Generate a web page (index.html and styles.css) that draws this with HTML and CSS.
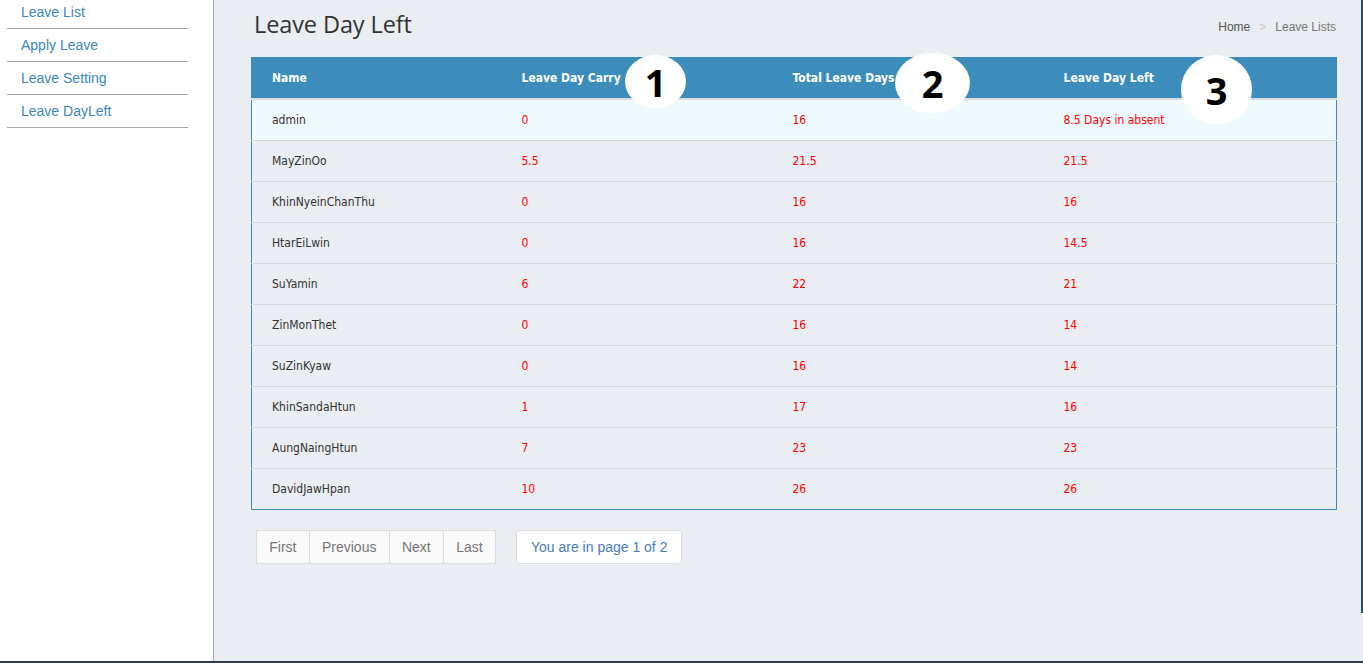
FILE: index.html
```html
<!DOCTYPE html>
<html>
<head>
<meta charset="utf-8">
<title>Leave Day Left</title>
<link rel="stylesheet" href="styles.css">
</head>
<body>
<div class="app">
  <aside class="sidebar">
    <ul class="nav">
      <li><a href="#">Leave List</a></li>
      <li><a href="#">Apply Leave</a></li>
      <li><a href="#">Leave Setting</a></li>
      <li><a href="#">Leave DayLeft</a></li>
    </ul>
  </aside>
  <main class="main">
    <div class="page-head">
      <h1 class="title">Leave Day Left</h1>
      <div class="crumbs"><span class="crumb-home">Home</span><span class="crumb-sep">&gt;</span><span class="crumb-cur">Leave Lists</span></div>
    </div>
    <div class="table-wrap">
      <table class="grid">
        <thead>
          <tr><th class="c1">Name</th><th class="c2">Leave Day Carry</th><th class="c3">Total Leave Days</th><th class="c4">Leave Day Left</th></tr>
        </thead>
        <tbody>
          <tr class="active"><td>admin</td><td class="num">0</td><td class="num">16</td><td class="num">8.5 Days in absent</td></tr>
          <tr><td>MayZinOo</td><td class="num">5.5</td><td class="num">21.5</td><td class="num">21.5</td></tr>
          <tr><td>KhinNyeinChanThu</td><td class="num">0</td><td class="num">16</td><td class="num">16</td></tr>
          <tr><td>HtarEiLwin</td><td class="num">0</td><td class="num">16</td><td class="num">14.5</td></tr>
          <tr><td>SuYamin</td><td class="num">6</td><td class="num">22</td><td class="num">21</td></tr>
          <tr><td>ZinMonThet</td><td class="num">0</td><td class="num">16</td><td class="num">14</td></tr>
          <tr><td>SuZinKyaw</td><td class="num">0</td><td class="num">16</td><td class="num">14</td></tr>
          <tr><td>KhinSandaHtun</td><td class="num">1</td><td class="num">17</td><td class="num">16</td></tr>
          <tr><td>AungNaingHtun</td><td class="num">7</td><td class="num">23</td><td class="num">23</td></tr>
          <tr><td>DavidJawHpan</td><td class="num">10</td><td class="num">26</td><td class="num">26</td></tr>
        </tbody>
      </table>
      <div class="badge b1">1</div>
      <div class="badge b2">2</div>
      <div class="badge b3">3</div>
    </div>
    <div class="pager-row">
      <div class="pager">
        <a href="#" class="pg">First</a><a href="#" class="pg">Previous</a><a href="#" class="pg">Next</a><a href="#" class="pg">Last</a>
      </div>
      <div class="page-info">You are in page 1 of 2</div>
    </div>
  </main>
  <div class="edge"><div class="edge-bar"></div></div>
</div>
<div class="taskbar"></div>
</body>
</html>
```
FILE: styles.css
```css
html, body {
  margin: 0;
  padding: 0;
  height: 663px;
  overflow: hidden;
  background: #eaedf2;
}
.app {
  display: flex;
  height: 661px;
}
.sidebar {
  width: 213px;
  flex: none;
  background: #ffffff;
  border-right: 1px solid #a9a9a9;
  overflow: hidden;
}
.nav {
  list-style: none;
  margin: -4px 0 0 7px;
  padding: 0;
  width: 181px;
}
.nav li {
  height: 32px;
  border-bottom: 1px solid #a5a5a5;
  display: flex;
  align-items: center;
}
.nav a {
  padding-left: 14px;
  font-family: "Liberation Sans", Arial, sans-serif;
  font-size: 14px;
  color: #3c87c1;
  text-decoration: none;
}
.main {
  flex: 1;
  padding: 0 24px 0 37px;
  min-width: 0;
}
.edge {
  width: 2px;
  flex: none;
}
.edge-bar {
  height: 613px;
  background: #1f4e6d;
}
.page-head {
  display: flex;
  justify-content: space-between;
  align-items: flex-start;
  height: 57px;
}
.title {
  margin: 8px 0 0 3px;
  font-family: "Open Sans", sans-serif;
  font-weight: 400;
  font-size: 23.5px;
  letter-spacing: -0.1px;
  color: #333333;
}
.crumbs {
  margin-top: 20px;
  margin-right: 1px;
  font-family: "Liberation Sans", Arial, sans-serif;
  font-size: 12px;
  color: #777777;
}
.crumb-home { color: #555555; }
.crumb-sep { color: #cccccc; padding: 0 9px; }
.table-wrap {
  position: relative;
}
.grid {
  width: 100%;
  border-collapse: collapse;
  table-layout: fixed;
  font-family: "DejaVu Sans", Verdana, sans-serif;
  font-stretch: condensed;
  font-size: 12px;
  border: 1px solid #3c8dbc;
  border-top: none;
}
.grid th.c1 { width: 250px; }
.grid th.c2 { width: 271px; }
.grid th.c3 { width: 271px; }
.grid thead tr {
  background: #3c8dbc;
}
.grid th {
  box-sizing: border-box;
  height: 42px;
  padding: 1px 0 0 20px;
  text-align: left;
  color: #ffffff;
  font-weight: 700;
  border-bottom: 2px solid #d8dbde;
}
.grid td {
  box-sizing: border-box;
  height: 41px;
  padding: 1px 0 0 20px;
  color: #333333;
  border-bottom: 1px solid #d5d8dc;
}
.grid tbody tr:last-child td {
  border-bottom: 1px solid #3c8dbc;
}
.grid tr.active td {
  background: #effaff;
}
.grid td.num {
  color: #ff0000;
}
.badge {
  position: absolute;
  background: #ffffff;
  border-radius: 50%;
  display: flex;
  align-items: center;
  justify-content: center;
  font-family: "Open Sans", sans-serif;
  font-weight: 700;
  font-size: 38px;
  color: #000000;
  line-height: 1;
}
.b1 { left: 374px; top: -2px; width: 61px; height: 53px; }
.b2 { left: 644px; top: -4px; width: 75px; height: 60px; }
.b3 { left: 930px; top: -2px; width: 71px; height: 69px; }
.pager-row {
  display: flex;
  align-items: flex-start;
  gap: 20px;
  margin-top: 20px;
  padding-left: 5px;
}
.pager {
  display: flex;
}
.pg {
  display: block;
  height: 32px;
  line-height: 32px;
  padding: 0 12.25px;
  background: #fafafa;
  border: 1px solid #dddddd;
  margin-left: -1px;
  font-family: "Liberation Sans", Arial, sans-serif;
  font-size: 14px;
  color: #777777;
  text-decoration: none;
}
.pg:first-child { margin-left: 0; }
.page-info {
  height: 32px;
  line-height: 32px;
  padding: 0 14px;
  background: #ffffff;
  border: 1px solid #dddddd;
  border-radius: 3px;
  font-family: "Liberation Sans", Arial, sans-serif;
  font-size: 14px;
  color: #4a7db8;
}
.taskbar {
  height: 2px;
  background: #2e3e4f;
}
```
